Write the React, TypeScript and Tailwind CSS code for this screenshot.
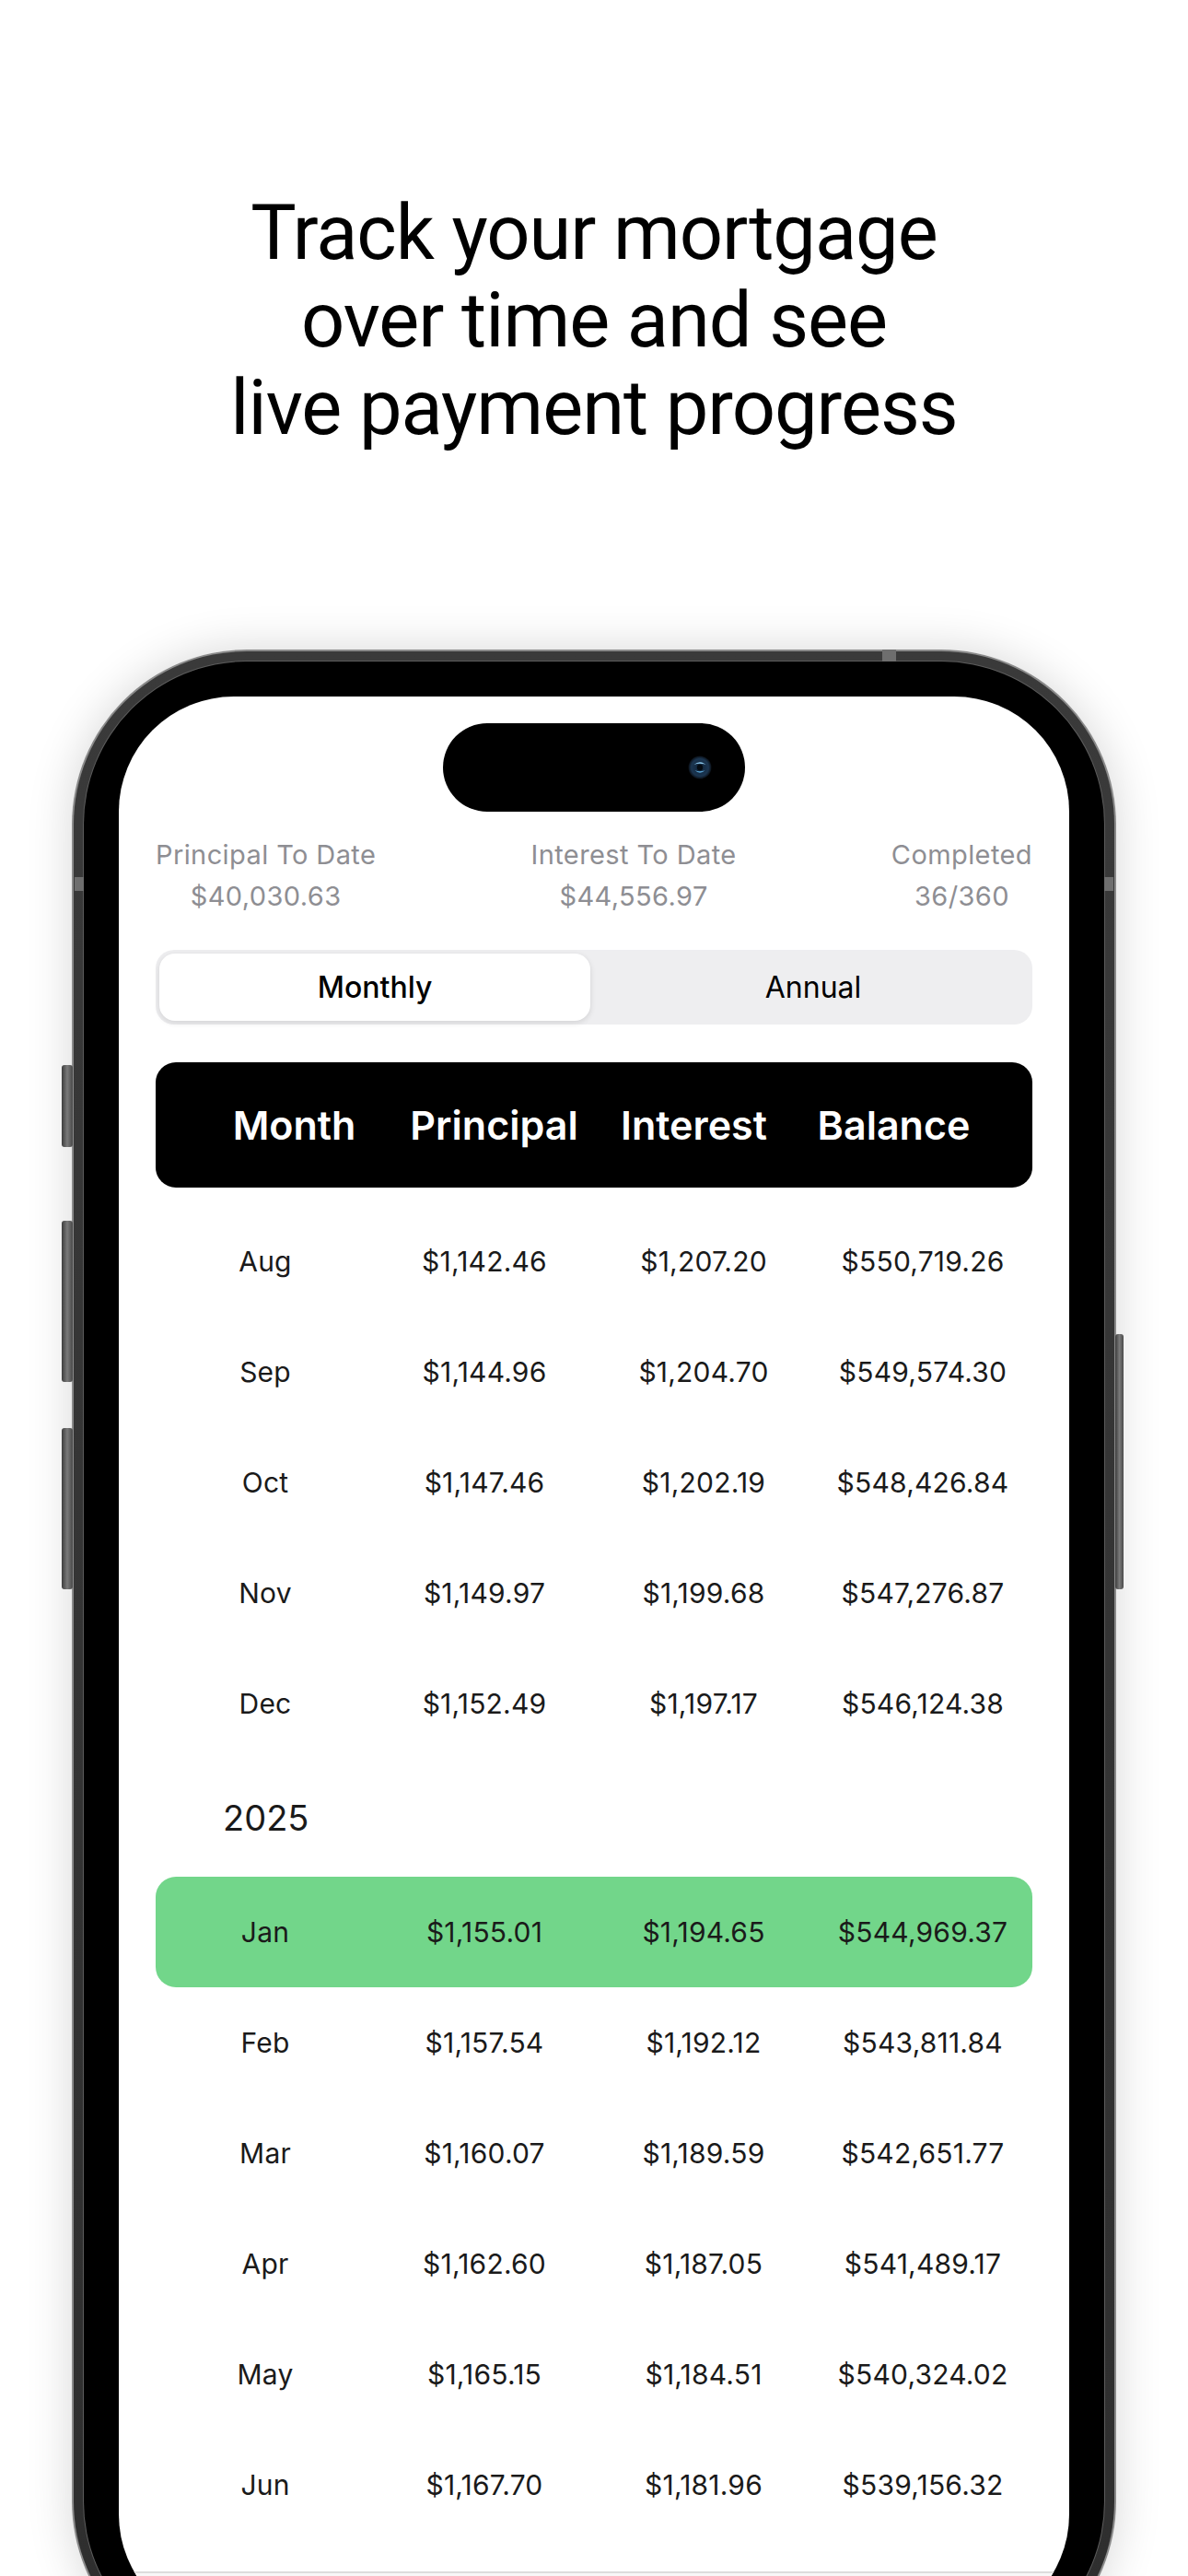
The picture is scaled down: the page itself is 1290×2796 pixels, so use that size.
import React from 'react';

type Row = { month: string; principal: string; interest: string; balance: string };

const rows2024: Row[] = [
  { month: 'Aug', principal: '$1,142.46', interest: '$1,207.20', balance: '$550,719.26' },
  { month: 'Sep', principal: '$1,144.96', interest: '$1,204.70', balance: '$549,574.30' },
  { month: 'Oct', principal: '$1,147.46', interest: '$1,202.19', balance: '$548,426.84' },
  { month: 'Nov', principal: '$1,149.97', interest: '$1,199.68', balance: '$547,276.87' },
  { month: 'Dec', principal: '$1,152.49', interest: '$1,197.17', balance: '$546,124.38' },
];

const rows2025: Row[] = [
  { month: 'Jan', principal: '$1,155.01', interest: '$1,194.65', balance: '$544,969.37' },
  { month: 'Feb', principal: '$1,157.54', interest: '$1,192.12', balance: '$543,811.84' },
  { month: 'Mar', principal: '$1,160.07', interest: '$1,189.59', balance: '$542,651.77' },
  { month: 'Apr', principal: '$1,162.60', interest: '$1,187.05', balance: '$541,489.17' },
  { month: 'May', principal: '$1,165.15', interest: '$1,184.51', balance: '$540,324.02' },
  { month: 'Jun', principal: '$1,167.70', interest: '$1,181.96', balance: '$539,156.32' },
];

const ui = { fontFamily: 'Inter, "Liberation Sans", sans-serif' };

const TableRow = ({ row, current }: { row: Row; current?: boolean }) => (
  <div
    className={`grid h-[120px] grid-cols-4 items-center text-center text-[30px] tracking-[0.2px] text-[#1a1a1a] ${
      current ? 'rounded-[22px] bg-[#72d68a]' : ''
    }`}
  >
    <div>{row.month}</div>
    <div>{row.principal}</div>
    <div>{row.interest}</div>
    <div>{row.balance}</div>
  </div>
);

const Stat = ({ label, value }: { label: string; value: string }) => (
  <div className="flex flex-col items-center text-[29px] leading-[34px] tracking-[0.4px] text-[#8e8e93]">
    <div>{label}</div>
    <div className="mt-[11px]">{value}</div>
  </div>
);

const SideButton = ({ className }: { className: string }) => (
  <div className={`absolute rounded-[3px] bg-gradient-to-r from-[#3e3e3e] via-[#7a7a7a] to-[#4a4a4a] ${className}`} />
);

export default function App() {
  return (
    <div className="relative h-[2796px] w-[1290px] overflow-hidden bg-white">
      {/* Headline */}
      <h1
        className="pt-[205px] text-center text-[83px] font-normal leading-[95px] tracking-[-1px] text-black"
        style={{ fontFamily: 'Roboto, "Liberation Sans", sans-serif' }}
      >
        Track your mortgage
        <br />
        over time and see
        <br />
        live payment progress
      </h1>

      {/* Phone */}
      <div className="relative mx-auto mt-[215px] h-[2200px] w-[1134px] rounded-[190px] shadow-[0_0_50px_rgba(0,0,0,0.16)]">
        <SideButton className="left-[-11px] top-[451px] h-[89px] w-[12px]" />
        <SideButton className="left-[-11px] top-[620px] h-[175px] w-[12px]" />
        <SideButton className="left-[-11px] top-[845px] h-[175px] w-[12px]" />
        <SideButton className="right-[-8px] top-[743px] h-[277px] w-[9px]" />

        <div className="h-full rounded-[190px] bg-[#8a8a8a] p-[2px]">
          <div className="relative h-full rounded-[188px] bg-gradient-to-b from-[#3a3a3a] to-[#2e2e2e] p-[10px]">
            {/* antenna bands */}
            <div className="absolute left-[878px] top-[-2px] h-[13px] w-[15px] bg-[#6e6e6e]" />
            <div className="absolute left-[1px] top-[245px] h-[15px] w-[10px] bg-[#6e6e6e]" />
            <div className="absolute right-[1px] top-[245px] h-[15px] w-[10px] bg-[#6e6e6e]" />

            <div className="h-full rounded-[178px] bg-[#5c5c5c] p-[1px]">
              <div className="h-full rounded-[177px] bg-black p-[38px]">
                {/* Screen */}
                <div className="flex h-full flex-col overflow-hidden rounded-[125px] bg-white" style={ui}>
                  {/* Dynamic island */}
                  <div className="relative mx-auto mt-[29px] h-[96px] w-[328px] shrink-0 rounded-full bg-black">
                    <svg className="absolute right-[36px] top-[35px]" width="26" height="26" viewBox="0 0 26 26">
                      <defs>
                        <radialGradient id="lens" cx="50%" cy="50%" r="50%">
                          <stop offset="0%" stopColor="#10243a" />
                          <stop offset="75%" stopColor="#1b3550" />
                          <stop offset="100%" stopColor="#0a0f16" />
                        </radialGradient>
                      </defs>
                      <circle cx="13" cy="13" r="12.5" fill="url(#lens)" />
                      <path d="M6.5 10 Q13 4.5 19.5 10 Q13 7.5 6.5 10Z" fill="#8cc8ec" />
                      <path d="M7.5 16 Q13 21.5 18.5 16 Q13 18.5 7.5 16Z" fill="#5aa6d6" />
                      <circle cx="13" cy="13" r="3.2" fill="#050b12" />
                    </svg>
                  </div>

                  {/* Stats */}
                  <div className="mt-[30px] flex shrink-0 justify-between px-[40px]">
                    <Stat label="Principal To Date" value="$40,030.63" />
                    <Stat label="Interest To Date" value="$44,556.97" />
                    <Stat label="Completed" value="36/360" />
                  </div>

                  {/* Segmented control */}
                  <div className="mx-[40px] mt-[41px] grid h-[81px] shrink-0 grid-cols-2 gap-[8px] rounded-[20px] bg-[#eeeef0] p-[4px] text-[32px] text-black">
                    <div className="flex items-center justify-center rounded-[17px] bg-white font-medium shadow-[0_2px_6px_rgba(0,0,0,0.12)]">
                      Monthly
                    </div>
                    <div className="flex items-center justify-center">Annual</div>
                  </div>

                  {/* Table header */}
                  <div className="mx-[40px] mt-[41px] grid h-[136px] shrink-0 grid-cols-4 items-center rounded-[22px] bg-black px-[42px] text-center text-[43px] font-semibold text-white">
                    <div>Month</div>
                    <div>Principal</div>
                    <div>Interest</div>
                    <div>Balance</div>
                  </div>

                  {/* Rows */}
                  <div className="mx-[40px] mt-[20px] shrink-0">
                    {rows2024.map((r) => (
                      <TableRow key={r.month} row={r} />
                    ))}
                    <div className="flex h-[128px] items-center pl-[73px] text-[38px] text-[#1a1a1a]">2025</div>
                    {rows2025.map((r) => (
                      <TableRow key={r.month} row={r} current={r.month === 'Jan'} />
                    ))}
                  </div>

                  {/* Tab bar edge */}
                  <div className="mt-[34px] flex-1 border-t-2 border-[#dcdcdc] bg-[#f7f7f7]" />
                </div>
              </div>
            </div>
          </div>
        </div>
      </div>
    </div>
  );
}
